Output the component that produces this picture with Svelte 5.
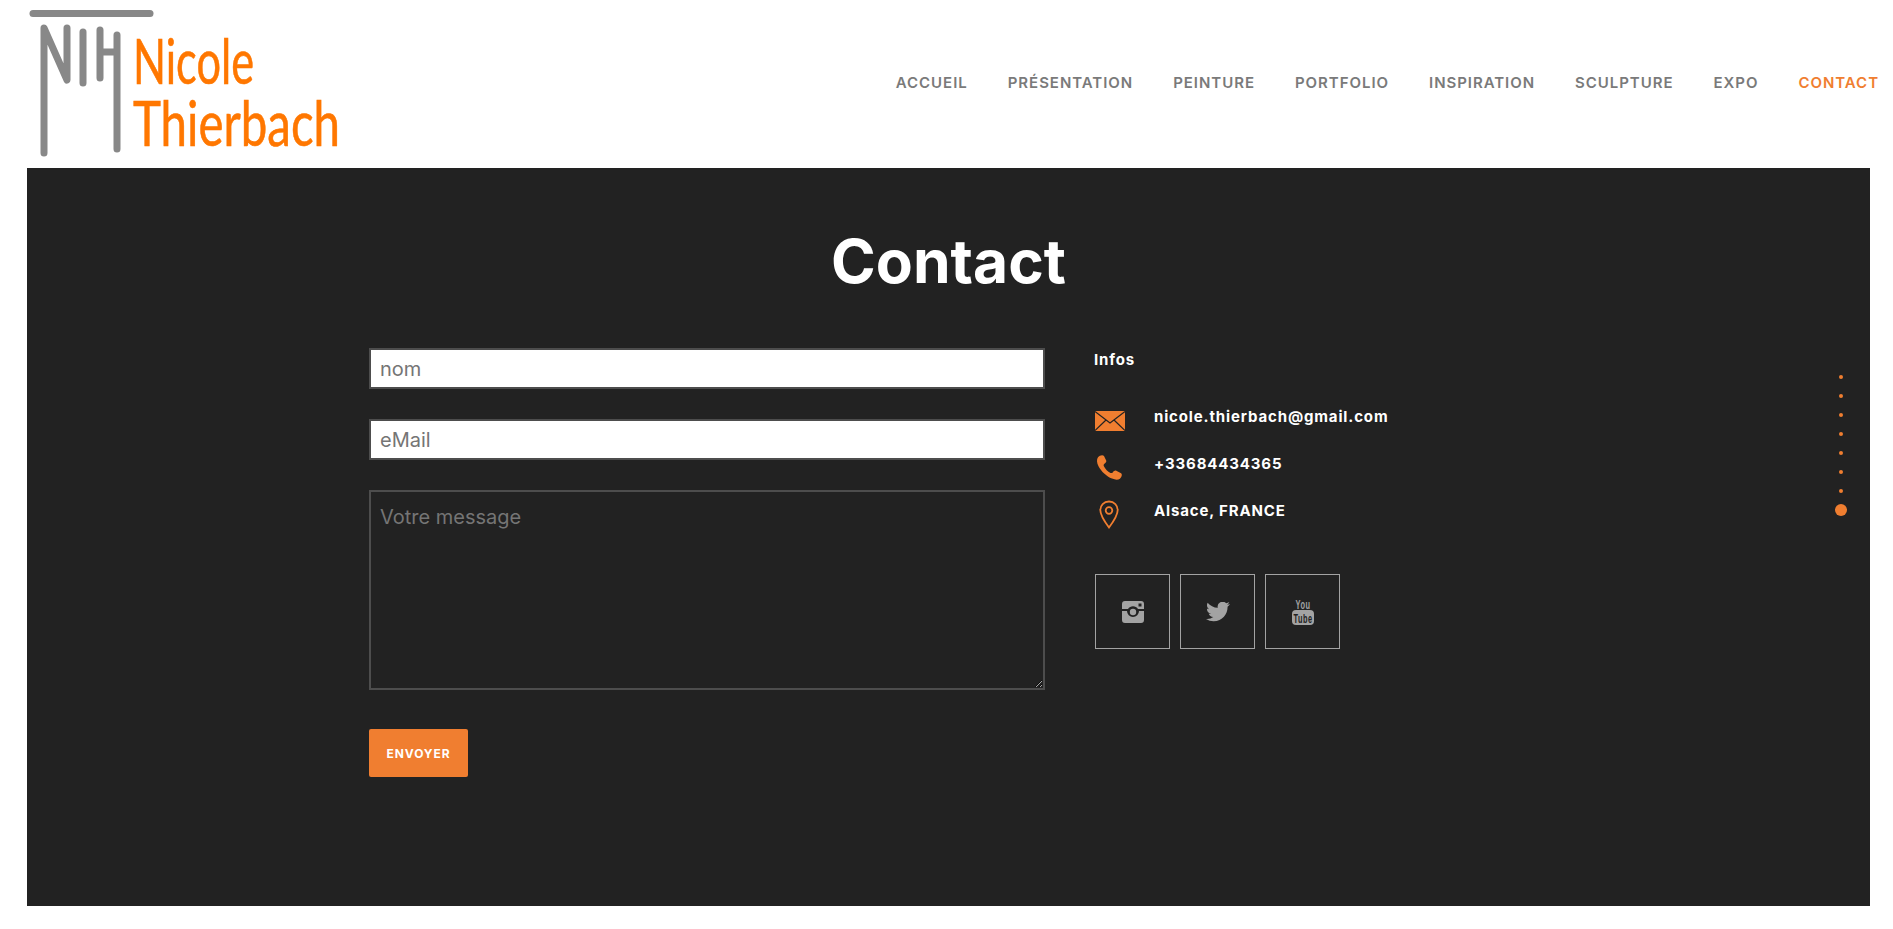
<script lang="ts">
  const nav = ["Accueil", "Présentation", "Peinture", "Portfolio", "Inspiration", "Sculpture", "Expo", "Contact"];
  const dots = [0, 1, 2, 3, 4, 5, 6, 7];
</script>

<div class="page">
  <header class="top">
    <svg class="logo" width="345" height="168" viewBox="0 0 345 168" role="img" aria-label="Nicole Thierbach">
      <g fill="none" stroke="#888" stroke-width="7" stroke-linecap="round" stroke-linejoin="round">
        <path d="M33 13.5H150" />
        <path d="M44 153V28L67 80V28" />
        <path d="M83 32V83" />
        <path d="M100 30V78M100 52H117M117 35V149" />
      </g>
      <g class="word">
        <text x="133" y="84" textLength="121" lengthAdjust="spacingAndGlyphs">Nicole</text>
        <text x="133" y="146" textLength="207" lengthAdjust="spacingAndGlyphs">Thierbach</text>
      </g>
    </svg>
    <nav class="menu">
      {#each nav as item}
        <a href="#top" class:active={item === "Contact"}>{item}</a>
      {/each}
    </nav>
  </header>

  <main class="panel">
    <h1>Contact</h1>
    <div class="cols">
      <form class="form">
        <input type="text" placeholder="nom" />
        <input type="text" placeholder="eMail" />
        <textarea placeholder="Votre message"></textarea>
        <button type="button">Envoyer</button>
      </form>
      <div class="info">
        <h2>Infos</h2>
        <ul>
          <li>
            <span class="ico">
              <svg width="30" height="20" viewBox="0 0 30 20">
                <rect width="30" height="20" fill="#f07e30" />
                <path d="M0 .5L15 12 30 .5M0 19.5L11 9M30 19.5L19 9" fill="none" stroke="#222" stroke-width="1.2" />
              </svg>
            </span>
            nicole.thierbach@gmail.com
          </li>
          <li>
            <span class="ico">
              <svg width="30" height="28" viewBox="0 0 30 28">
                <path d="M3 3.2C4.5 1.2 8 .6 9 2l2.2 4.6c.5 1.2-.3 2.2-2 3.4-.7.5-.7 1.3-.3 2.2 1.5 3 3.7 5.2 6.600 6.700.9.400 1.600.200 2.200-.5 1.200-1.500 2.400-2.200 3.600-1.700l4.800 2.500c1.300.8.800 4-1.200 5.500-1.800 1.300-4.500 1.300-7.900-.1C11.500 22.300 6.300 17.500 3.500 12.200 1.700 8.700 1.500 5.300 3 3.200z" fill="#f07e30" />
              </svg>
            </span>
            +33684434365
          </li>
          <li>
            <span class="ico">
              <svg width="30" height="29" viewBox="0 0 30 29">
                <path d="M14 1.500C8.700 1.500 5.300 5.500 5.300 10c0 4.800 4.200 11.500 8.700 17.500 4.500-6 8.700-12.700 8.700-17.500 0-4.500-3.400-8.500-8.700-8.500z" fill="none" stroke="#f07e30" stroke-width="1.800" />
                <circle cx="14" cy="10.500" r="3.300" fill="none" stroke="#f07e30" stroke-width="1.800" />
              </svg>
            </span>
            Alsace, FRANCE
          </li>
        </ul>
        <div class="social">
          <a href="#top" aria-label="Instagram">
            <svg width="22" height="22" viewBox="0 0 22 22">
              <path fill-rule="evenodd" fill="#a3a3a3" d="M3 0H19a3 3 0 0 1 3 3V8H16a6 6 0 0 0-10 0H0V3a3 3 0 0 1 3-3zM16.500 2.500v3h3v-3zM0 10H5a6 6 0 1 0 12 0H22v9a3 3 0 0 1-3 3H3a3 3 0 0 1-3-3z" />
              <circle cx="11" cy="11" r="3.200" fill="#a3a3a3" />
            </svg>
          </a>
          <a href="#top" aria-label="Twitter">
            <svg width="24" height="20" viewBox="0 2.500 24 20">
              <path fill="#a3a3a3" d="M23.950 4.570a10 10 0 0 1-2.820.770 4.960 4.960 0 0 0 2.160-2.720c-.950.550-2 .950-3.130 1.180a4.920 4.920 0 0 0-8.380 4.480C7.690 8.100 4.070 6.130 1.640 3.160a4.820 4.820 0 0 0-.660 2.470c0 1.710.870 3.210 2.190 4.100a4.900 4.900 0 0 1-2.230-.620v.060a4.920 4.920 0 0 0 3.950 4.830 5 5 0 0 1-2.210.080 4.940 4.940 0 0 0 4.600 3.420A9.870 9.870 0 0 1 0 19.540a14 14 0 0 0 7.560 2.210c9.050 0 14-7.500 14-13.980 0-.210 0-.420-.020-.630a9.940 9.940 0 0 0 2.460-2.550z" />
            </svg>
          </a>
          <a href="#top" aria-label="YouTube">
            <svg class="yt" width="22" height="27" viewBox="0 0 22 27">
              <text class="you" x="11" y="10.500" text-anchor="middle" textLength="15" lengthAdjust="spacingAndGlyphs">You</text>
              <rect y="12" width="22" height="15" rx="4" fill="#a3a3a3" />
              <text class="tube" x="11" y="24.500" text-anchor="middle" textLength="19" lengthAdjust="spacingAndGlyphs">Tube</text>
            </svg>
          </a>
        </div>
      </div>
    </div>
    <div class="dots">
      {#each dots as d}
        <span class:on={d === 7}></span>
      {/each}
    </div>
  </main>
</div>

<style>
  :global(body) {
    background: #fff;
    font-family: Inter, "Liberation Sans", sans-serif;
  }
  .page {
    height: 929px;
    overflow: hidden;
  }
  .top {
    height: 168px;
    display: flex;
    justify-content: space-between;
    align-items: center;
    padding-right: 14px;
  }
  .logo {
    display: block;
    flex: none;
  }
  .word {
    font-family: Lato, sans-serif;
    font-size: 62px;
    font-weight: 400;
    fill: #ff7700;
    stroke: #ff7700;
    stroke-width: 0.6px;
  }
  .menu {
    display: flex;
    gap: 40px;
    margin-bottom: 3px;
  }
  .menu a {
    color: #7a7a7a;
    font-size: 15px;
    font-weight: 600;
    letter-spacing: 0.96px;
    text-transform: uppercase;
    text-decoration: none;
  }
  .menu a.active {
    color: #f07e30;
  }
  .panel {
    position: relative;
    box-sizing: border-box;
    margin: 0 23px 0 27px;
    height: 738px;
    padding: 55px 0 0 342px;
    background: #222;
  }
  h1 {
    margin: 0 0 49px -342px;
    text-align: center;
    color: #fff;
    font-size: 60.5px;
    line-height: 76px;
    font-weight: 700;
  }
  .cols {
    display: flex;
    gap: 49px;
  }
  .form {
    width: 676px;
    display: flex;
    flex-direction: column;
    align-items: flex-start;
  }
  input,
  textarea {
    box-sizing: border-box;
    display: block;
    width: 100%;
    margin: 0 0 30px;
    padding: 0 9px;
    border: 2px solid #4d4d4d;
    border-radius: 0;
    outline: none;
    font: 400 20px Inter, sans-serif;
    background: #fff;
  }
  input {
    height: 41px;
  }
  textarea {
    height: 200px;
    padding-top: 13px;
    margin-bottom: 39px;
    background: transparent;
    resize: vertical;
  }
  input::placeholder,
  textarea::placeholder {
    color: #757575;
    opacity: 1;
  }
  button {
    width: 99px;
    height: 48px;
    padding: 0;
    border: 0;
    border-radius: 2px;
    background: #f07e30;
    color: #fff;
    font: 700 12px Inter, sans-serif;
    letter-spacing: 0.9px;
    text-transform: uppercase;
  }
  .info {
    color: #fff;
    font-size: 15px;
    font-weight: 700;
    letter-spacing: 0.86px;
  }
  h2 {
    margin: 2px 0 23px;
    font-size: 15px;
    line-height: 20px;
    font-weight: 700;
  }
  ul {
    margin: 0;
    padding: 0;
    list-style: none;
  }
  li {
    display: flex;
    align-items: center;
    height: 47px;
  }
  .ico {
    width: 60px;
    flex: none;
    display: flex;
    margin-left: 1px;
    margin-right: -1px;
    padding-top: 8px;
  }
  .social {
    display: flex;
    gap: 10px;
    margin-top: 40px;
    margin-left: 1px;
  }
  .social a {
    box-sizing: border-box;
    width: 75px;
    height: 75px;
    display: flex;
    align-items: center;
    justify-content: center;
    border: 1px solid #a3a3a3;
  }
  .yt {
    overflow: visible;
  }
  .you {
    font: 700 13px "Liberation Sans", sans-serif;
    fill: #a3a3a3;
  }
  .tube {
    font: 700 13px "Liberation Sans", sans-serif;
    fill: #222;
  }
  .dots {
    position: absolute;
    top: 207px;
    right: 23px;
    width: 12px;
    display: flex;
    flex-direction: column;
    align-items: center;
    gap: 15px;
  }
  .dots span {
    width: 4px;
    height: 4px;
    border-radius: 50%;
    background: #f07e30;
  }
  .dots span.on {
    width: 12px;
    height: 12px;
    margin-top: -4px;
  }
</style>
